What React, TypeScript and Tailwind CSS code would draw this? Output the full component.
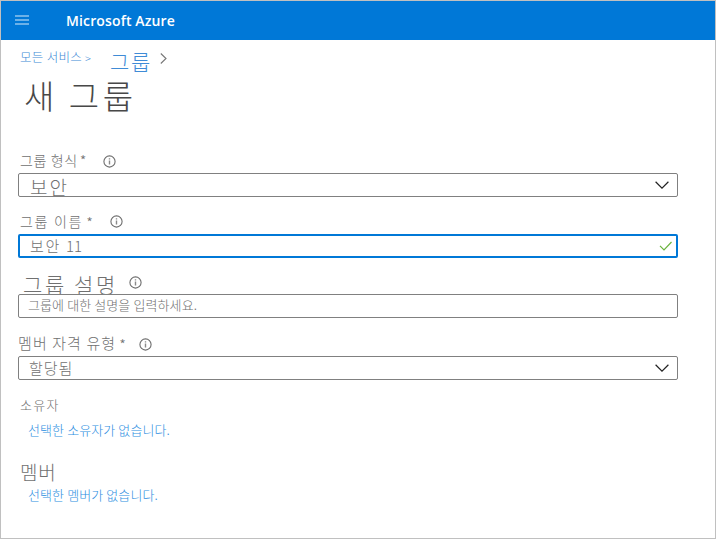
import React from "react";

function InfoIcon({ className = "" }: { className?: string }) {
  return (
    <svg viewBox="0 0 13 13" className={`h-[13px] w-[13px] shrink-0 ${className}`} fill="none">
      <circle cx="6.5" cy="6.5" r="5.6" stroke="#6e6e6e" strokeWidth="1.1" />
      <path d="M6.5 5.4V9.6M6.5 3.2V4.4" stroke="#8a8a8a" strokeWidth="1.4" />
    </svg>
  );
}

function ChevronDown() {
  return (
    <svg viewBox="0 0 14 8" className="h-2 w-3.5 shrink-0" fill="none">
      <path d="M.6.8 7 7.1 13.4.8" stroke="#222" strokeWidth="1.2" />
    </svg>
  );
}

export default function App() {
  return (
    <div className="flex h-[539px] w-[716px] flex-col overflow-hidden border border-[#c0c0c0] bg-white font-['Noto_Sans_CJK_KR',sans-serif] font-light whitespace-nowrap text-[#707070]">
      <header className="flex h-[39px] shrink-0 items-center bg-[#0078d7] pl-3.5">
        <svg viewBox="0 0 14 10" className="-mt-px h-2.5 w-3.5" fill="none">
          <path d="M0 1H14M0 5H14M0 9H14" stroke="#8fc3ee" strokeWidth="1.5" />
        </svg>
        <span className="ml-[37px] font-['Open_Sans',sans-serif] text-sm font-semibold tracking-[0.14px] text-white">Microsoft Azure</span>
      </header>

      <main className="flex flex-col pr-[37px] pl-[17px]">
        <nav className="flex h-[34px] pl-0.5 text-[#3f8bd6]">
          <span className="pt-[9px] text-[12.5px] leading-4 tracking-[0.3px]">모든 서비스</span>
          <span className="ml-[3px] pt-2.5 text-[11px] leading-4">&gt;</span>
          <span className="ml-[19px] pt-[11px] text-[21px] leading-5 tracking-[1.8px]">그룹</span>
          <svg viewBox="0 0 7 11" className="mt-[13px] ml-2 h-[11px] w-[7px]" fill="none">
            <path d="M.8.5 6 5.5.8 10.5" stroke="#777" strokeWidth="1.1" />
          </svg>
        </nav>
        <h1 className="h-[76px] pl-1.5 text-[33px] leading-[42px] tracking-[3.6px] text-[#484848]">새 그룹</h1>

        <div className="flex h-[23px] pl-0.5">
          <span className="text-sm leading-5 tracking-[0.6px]">그룹 형식</span>
          <span className="ml-0.5 pt-px text-[15px] leading-5">*</span>
          <InfoIcon className="mt-[5px] ml-[17px]" />
        </div>
        <div className="flex h-6 items-center justify-between rounded-[2px] border border-[#808080] pr-2 pl-[11px]">
          <span className="pt-[3px] text-[19px] leading-6 tracking-[2px]">보안</span>
          <ChevronDown />
        </div>

        <div className="flex h-[37px] pt-3.5 pl-0.5">
          <span className="text-sm leading-5 tracking-[1.7px]">그룹 이름</span>
          <span className="ml-[3px] pt-0.5 text-[15px] leading-5">*</span>
          <InfoIcon className="mt-1 ml-[17px]" />
        </div>
        <div className="flex h-6 items-center justify-between rounded-[2px] border-2 border-[#0078d7] pr-[3px] pl-2.5">
          <span className="text-[15px] leading-5 tracking-[1.7px]">보안 <span className="tracking-normal">11</span></span>
          <svg viewBox="0 0 14 10" className="h-2.5 w-3.5" fill="none">
            <path d="M1 4.8 5 8.8 12.5 1" stroke="#6bb33f" strokeWidth="1.2" />
          </svg>
        </div>

        <div className="flex h-9 pt-[11px] pl-[5px]">
          <span className="pt-[5px] text-[21px] leading-5 tracking-[2.6px]">그룹 설명</span>
          <InfoIcon className="mt-[7px] ml-[11px]" />
        </div>
        <div className="flex h-6 items-center rounded-[2px] border border-[#808080] pl-[9px]">
          <span className="-mt-[3px] text-[13px] leading-5 tracking-[0.1px]">그룹에 대한 설명을 입력하세요.</span>
        </div>

        <div className="flex h-[38px] pt-[15px]">
          <span className="text-[15px] leading-5 tracking-[1.1px]">멤버 자격 유형</span>
          <span className="ml-[3px] pt-0.5 text-[15px] leading-5">*</span>
          <InfoIcon className="mt-[5px] ml-[13px]" />
        </div>
        <div className="flex h-6 items-center justify-between rounded-[2px] border border-[#808080] pr-2 pl-2.5">
          <span className="text-[15px] leading-5 tracking-[0.9px]">할당됨</span>
          <ChevronDown />
        </div>

        <section className="flex flex-col pt-[15px]">
          <h2 className="pl-0.5 text-[13px] leading-5 tracking-[1.3px]">소유자</h2>
          <a className="pt-[5px] pl-2.5 text-[13px] leading-5 tracking-[0.1px] text-[#2f8fdf]">선택한 소유자가 없습니다.</a>
        </section>
        <section className="flex flex-col pt-5">
          <h2 className="pl-0.5 text-[19px] leading-6 tracking-[0.8px]">멤버</h2>
          <a className="pt-px pl-2.5 text-[13px] leading-5 tracking-[0.1px] text-[#2f8fdf]">선택한 멤버가 없습니다.</a>
        </section>
      </main>
    </div>
  );
}
